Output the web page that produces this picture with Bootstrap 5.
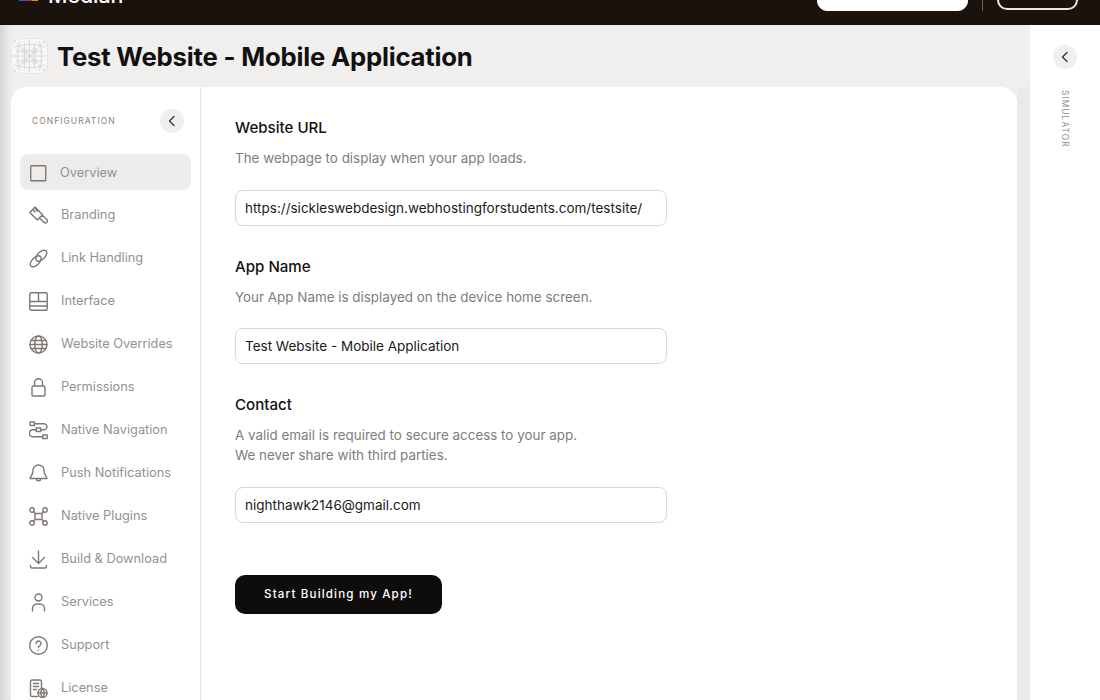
<!DOCTYPE html>
<html lang="en">
<head>
<meta charset="utf-8">
<title>Test Website - Mobile Application</title>
<link href="https://cdn.jsdelivr.net/npm/bootstrap@5.3.0/dist/css/bootstrap.min.css" rel="stylesheet">
<style>
html,body{height:700px;overflow:hidden;}
body{font-family:"Inter","Lato","Liberation Sans",sans-serif;background:#fff;color:#111;}
.topbar{height:25px;background:#1a120d;overflow:hidden;padding:0 22px 0 19px;}
.brand-wrap{height:24px;gap:10px;margin-bottom:18px;align-items:flex-end;}
.brand-mark{width:19px;height:18px;margin-bottom:6px;}
.brand-name{color:#fff;font-size:21.3px;line-height:24px;font-weight:500;}
.top-btn-solid{width:151px;height:40px;background:#fff;border:1px solid #fff;border-radius:10px;margin-bottom:14px;}
.top-sep{width:1px;height:40px;background:#6b6561;margin:0 14px 14px;}
.top-btn-line{width:81px;height:40px;background:transparent;border:2px solid #e9e6e3;border-radius:10px;margin-bottom:15px;}
.shell{height:675px;}
.workspace{width:1030px;background:#f0efee;padding-left:11px;box-shadow:inset 11px 0 9px -6px #d4d3d1;position:relative;}
.title-row{height:62px;gap:9px;}
.app-icon{width:37px;height:36px;flex:none;}
.page-title{font-size:25.7px;font-weight:700;margin:3px 0 0;letter-spacing:-.2px;color:#111;}
.sheet{width:1006px;height:613px;background:#fff;border-radius:16px 16px 0 0;overflow:hidden;}
.gutter{position:absolute;right:0;top:62px;bottom:0;width:13px;background:#ebeaea;}
.side{width:190px;border-right:1px solid #e4e3e2;padding:22px 9px 0 9px;flex:none;}
.side-head{height:24px;padding:0 7px 0 12px;margin-bottom:21px;}
.side-label{font-size:8.5px;letter-spacing:1.02px;color:#8c8177;}
.round-btn{width:24px;height:24px;border-radius:50%;background:#f0efee;border:0;padding:0;}
.round-btn svg{width:14px;height:14px;display:block;margin:auto;}
.menu-item{height:36px;margin-bottom:7px;padding:2px 0 0 9px;gap:13px;color:#949190;font-size:12.8px;border-radius:8px;text-decoration:none;}
.menu-item.current{background:#edeceb;margin-bottom:6px;gap:12px;}
.menu-item svg{width:19px;height:19px;flex:none;fill:none;stroke:#7f7873;stroke-width:1.4;stroke-linecap:round;stroke-linejoin:round;}
.form-pane{padding:30px 0 0 34px;}
.field-title{font-size:15.1px;font-weight:500;line-height:20px;padding-top:1px;margin:0 0 10px;color:#111;}
.field-help{font-size:13.42px;line-height:20px;color:#7d7d7d;margin:0 0 21.5px;}
.field-input{width:432px;height:36px;border:1px solid #d6d6dc;border-radius:8px;padding:0 9px;font-size:13.5px;color:#1a1a1a;box-shadow:none;margin-bottom:30px;}
.field-input.last{margin-bottom:0;}
.start-btn{width:207px;height:39px;margin-top:52px;padding:2px 0 0;background:#0f0d0b;color:#fff;border:0;border-radius:10px;font-size:11.6px;letter-spacing:1.15px;font-weight:500;}
.sim-rail{width:70px;background:#fff;padding-top:20px;}
.sim-label{writing-mode:vertical-rl;font-size:8.3px;letter-spacing:1.1px;color:#8b8b8b;margin-top:21px;margin-right:1px;}
</style>
</head>
<body>
<header class="topbar d-flex align-items-end">
  <div class="brand-wrap d-flex flex-shrink-0">
    <svg class="brand-mark" viewBox="0 0 19 18"><rect width="7" height="18" fill="#3a55c8"/><rect x="7" width="6" height="18" fill="#b3322e"/><rect x="13" width="6" height="18" fill="#e0872b"/></svg>
    <span class="brand-name">Median</span>
  </div>
  <div class="ms-auto d-flex align-items-end flex-shrink-0">
    <div class="top-btn-solid"></div>
    <div class="top-sep"></div>
    <div class="top-btn-line"></div>
  </div>
</header>
<div class="shell d-flex">
  <div class="workspace">
    <div class="title-row d-flex align-items-center">
      <svg class="app-icon" viewBox="0 0 37 36" fill="none" stroke="#d6d6d4" stroke-width=".9">
        <rect x=".5" y=".5" width="36" height="35" rx="9" fill="#f7f7f6" stroke="#e4e4e2"/>
        <path d="M3 9q15.500-5 31 0M3 27q15.500 5 31 0M9 3q-5 15 0 30M28 3q5 15 0 30M18.500 1v34M1 18h35M13.500 5v26M23.500 5v26M5 13h27M5 23h27M3 3l31 30M34 3L3 33"/>
        <circle cx="13.500" cy="13" r="2.500"/><circle cx="23.500" cy="13" r="2.500"/><circle cx="13.500" cy="23" r="2.500"/><circle cx="23.500" cy="23" r="2.500"/>
      </svg>
      <h1 class="page-title">Test Website - Mobile Application</h1>
    </div>
    <div class="gutter"></div>
    <div class="sheet d-flex position-relative">
      <nav class="side">
        <div class="side-head d-flex align-items-center justify-content-between">
          <span class="side-label">CONFIGURATION</span>
          <button class="round-btn" type="button" aria-label="Collapse"><svg viewBox="0 0 14 14" fill="none" stroke="#333" stroke-width="1.3" stroke-linecap="round" stroke-linejoin="round"><path d="M9 2.500L4.500 7 9 11.500"/></svg></button>
        </div>
        <a class="menu-item current d-flex align-items-center" href="#"><svg viewBox="0 0 19 19"><rect x="1.700" y="1.700" width="15" height="15" rx=".8"/></svg>Overview</a>
        <a class="menu-item d-flex align-items-center" href="#"><svg viewBox="0 0 19 19"><path d="M6 1L.8 6.500l7.500 7.500 5.200-5.200zM3.500 3.500l2.500 2.500M6.500 3.200l1.800 1.800M13 9l4.600 4.200a1.700 1.700 0 0 1-2.600 3.200L10.500 12"/></svg>Branding</a>
        <a class="menu-item d-flex align-items-center" href="#"><svg viewBox="0 0 19 19"><ellipse cx="6.700" cy="12.300" rx="6.800" ry="3.700" transform="rotate(-45 6.700 12.300)"/><ellipse cx="12.300" cy="6.700" rx="6.800" ry="3.700" transform="rotate(-45 12.300 6.700)"/></svg>Link Handling</a>
        <a class="menu-item d-flex align-items-center" href="#"><svg viewBox="0 0 19 19"><rect x=".8" y=".8" width="17.400" height="17.400" rx="1.200"/><path d="M.8 9.500h17.400M.8 14h17.400M9.500 .8v8.700"/></svg>Interface</a>
        <a class="menu-item d-flex align-items-center" href="#"><svg viewBox="0 0 19 19"><circle cx="9.500" cy="9.500" r="8.500"/><ellipse cx="9.500" cy="9.500" rx="3.800" ry="8.500"/><path d="M1 9.500h17M2.200 5.500h14.600M2.200 13.500h14.600"/></svg>Website Overrides</a>
        <a class="menu-item d-flex align-items-center" href="#"><svg viewBox="0 0 19 19"><rect x="3" y="8" width="13" height="10" rx="1.500"/><path d="M5.500 8V4.800a4 4 0 0 1 8 0V8"/></svg>Permissions</a>
        <a class="menu-item d-flex align-items-center" href="#"><svg viewBox="0 0 19 19"><rect x="1" y="1" width="4.500" height="3.500"/><rect x="7.200" y="7" width="4.500" height="3.500"/><rect x="13.700" y="14" width="4.500" height="3.500"/><path d="M5.500 2.800h9.500a2.900 2.900 0 0 1 2 5M7 8.800H3.800a3.400 3.400 0 0 0 0 6.900h9.900M11.700 8.800H16"/></svg>Native Navigation</a>
        <a class="menu-item d-flex align-items-center" href="#"><svg viewBox="0 0 19 19"><path d="M9.500 1a5.500 5.500 0 0 0-5.500 5.500c0 4.500-3 6.500-3 8h17c0-1.500-3-3.500-3-8A5.500 5.500 0 0 0 9.500 1zM7.200 14.500a2.300 2.300 0 0 0 4.600 0"/></svg>Push Notifications</a>
        <a class="menu-item d-flex align-items-center" href="#"><svg viewBox="0 0 19 19"><circle cx="3" cy="3" r="2.200"/><circle cx="16" cy="3" r="2.200"/><circle cx="3" cy="16" r="2.200"/><circle cx="16" cy="16" r="2.200"/><path d="M6 6.500h7v6H6zM4.500 4.500L6 6.500M14.500 4.500L13 6.500M4.500 14.500L6 12.500M14.500 14.500L13 12.500"/></svg>Native Plugins</a>
        <a class="menu-item d-flex align-items-center" href="#"><svg viewBox="0 0 19 19"><path d="M9.500 1v12.500M3.500 7.500l6 6 6-6M1.500 15.500v1a1.500 1.500 0 0 0 1.500 1.500h13a1.500 1.500 0 0 0 1.500-1.500v-1"/></svg>Build &amp; Download</a>
        <a class="menu-item d-flex align-items-center" href="#"><svg viewBox="0 0 19 19"><circle cx="9.500" cy="4.500" r="3.500"/><path d="M3.500 18v-2.500a4.500 4.500 0 0 1 4.500-4.500h3a4.500 4.500 0 0 1 4.500 4.500V18"/></svg>Services</a>
        <a class="menu-item d-flex align-items-center" href="#"><svg viewBox="0 0 19 19"><circle cx="9.500" cy="9.500" r="8.800"/><path d="M7 7.500a2.500 2.500 0 1 1 3.800 2.100c-.9.500-1.300 1-1.300 2M9.500 14.200v.1"/></svg>Support</a>
        <a class="menu-item d-flex align-items-center" href="#"><svg viewBox="0 0 19 19"><path d="M8.500 17.500H3a1.500 1.500 0 0 1-1.500-1.500V2.500A1.500 1.500 0 0 1 3 1h8a1.500 1.500 0 0 1 1.500 1.500V9M4.500 4.500h5M4.500 7.500h5M4.500 10.500h3"/><circle cx="13.500" cy="14" r="4.500"/><path d="M9 14h9M13.500 9.500c-2.500 3-2.500 6 0 9M13.500 9.500c2.500 3 2.500 6 0 9"/></svg>License</a>
      </nav>
      <main class="form-pane">
        <h2 class="field-title">Website URL</h2>
        <p class="field-help">The webpage to display when your app loads.</p>
        <input class="form-control field-input" type="text" value="https://sickleswebdesign.webhostingforstudents.com/testsite/" aria-label="Website URL">
        <h2 class="field-title">App Name</h2>
        <p class="field-help">Your App Name is displayed on the device home screen.</p>
        <input class="form-control field-input" type="text" value="Test Website - Mobile Application" aria-label="App Name">
        <h2 class="field-title">Contact</h2>
        <p class="field-help">A valid email is required to secure access to your app.<br>We never share with third parties.</p>
        <input class="form-control field-input last" type="text" value="nighthawk2146@gmail.com" aria-label="Contact">
        <button class="btn start-btn d-block" type="button">Start Building my App!</button>
      </main>
    </div>
  </div>
  <aside class="sim-rail d-flex flex-column align-items-center">
    <button class="round-btn" type="button" aria-label="Expand simulator"><svg viewBox="0 0 14 14" fill="none" stroke="#333" stroke-width="1.3" stroke-linecap="round" stroke-linejoin="round"><path d="M9 2.500L4.500 7 9 11.500"/></svg></button>
    <span class="sim-label">SIMULATOR</span>
  </aside>
</div>
</body>
</html>
